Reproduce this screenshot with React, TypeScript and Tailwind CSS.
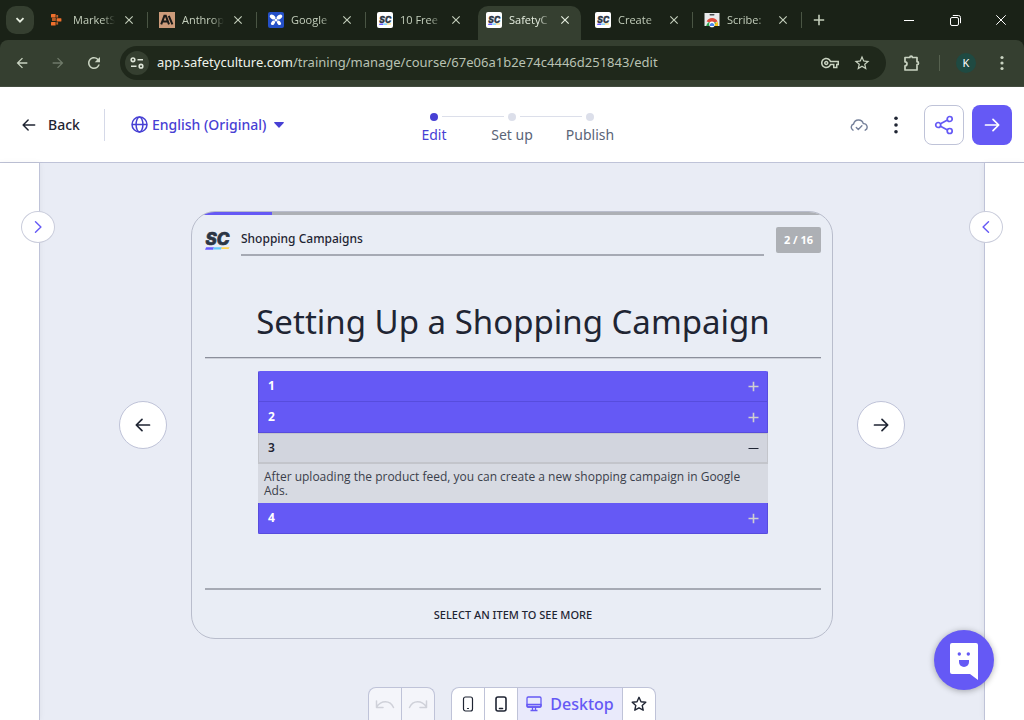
import { useState, type ReactNode } from "react";
import {
  MdArrowBack,
  MdArrowForward,
  MdClose,
  MdOutlineVpnKey,
  MdRefresh,
  MdStarBorder,
} from "react-icons/md";

function ScMark({ className }: { className?: string }) {
  return (
    <svg viewBox="0 0 26 20" className={className} overflow="visible" aria-hidden="true">
      <text
        x="0.6"
        y="15"
        fontFamily="Inter, 'Liberation Sans', sans-serif"
        fontSize="17"
        fontWeight="800"
        fontStyle="italic"
        fill="#2b3544"
        stroke="#2b3544"
        strokeWidth="0.7"
      >
        SC
      </text>
      <path d="M1.2 17.2H9l-1 2.6H0z" fill="#6559ff" />
      <path d="M9 17.2h8l-1 2.2H8z" fill="#62c8f8" />
      <path d="M17 17.2h7.5l-1 1.9H16z" fill="#ffd34f" />
    </svg>
  );
}

function ScFavicon() {
  return (
    <span className="flex size-4 shrink-0 items-center justify-center rounded-xs bg-white">
      <ScMark className="w-[13px]" />
    </span>
  );
}

function BlocksFavicon() {
  return (
    <svg viewBox="0 0 16 16" className="size-4 shrink-0" fill="#f0702c" aria-hidden="true">
      <rect x="1" y="2" width="4.600" height="3.400" rx=".5" />
      <rect x="2" y="5.800" width="3.800" height="3.200" rx=".5" opacity=".75" />
      <rect x="6.300" y="3" width="1.800" height="2.600" opacity=".8" />
      <rect x="6.600" y="6.200" width="4.800" height="3.400" rx=".5" />
      <rect x="6.300" y="10.200" width="1.800" height="2.400" opacity=".8" />
      <rect x="1" y="10" width="4.600" height="3.400" rx=".5" />
    </svg>
  );
}

function AnthropicFavicon() {
  return (
    <svg viewBox="0 0 16 16" className="size-4 shrink-0" aria-hidden="true">
      <rect width="16" height="16" fill="#cc9b7a" />
      <path
        d="M2.200 12.400 5.400 3.800h1.400l3.200 8.600M3.800 9.500h4.800M9.800 3.800l3.600 8.600"
        fill="none"
        stroke="#1b1a18"
        strokeWidth="2"
      />
    </svg>
  );
}

function ButterflyFavicon() {
  return (
    <svg viewBox="0 0 16 16" className="size-4 shrink-0" aria-hidden="true">
      <rect width="16" height="16" rx="2" fill="#2450c8" />
      <g fill="#fff">
        <ellipse cx="4.6" cy="5" rx="3.1" ry="2" transform="rotate(35 4.6 5)" />
        <ellipse cx="11.4" cy="5" rx="3.1" ry="2" transform="rotate(-35 11.4 5)" />
        <ellipse cx="5" cy="10.8" rx="2.5" ry="1.7" transform="rotate(-50 5 10.8)" />
        <ellipse cx="11" cy="10.8" rx="2.5" ry="1.7" transform="rotate(50 11 10.8)" />
        <circle cx="8" cy="8" r="1.6" />
      </g>
    </svg>
  );
}

function WebStoreFavicon() {
  return (
    <svg viewBox="0 0 16 16" className="size-4 shrink-0" aria-hidden="true">
      <path d="M.5 1h15v13H.5z" fill="#e9eaec" />
      <rect x="5.5" y="2" width="5" height="1.4" rx=".7" fill="#4a4d52" />
      <path d="M2.200 14a6 6 0 0 1 11.600 0z" fill="#2da350" />
      <path d="M2.600 9.600a6 6 0 0 1 11 0L8 11z" fill="#de4a3c" />
      <path d="M13.400 9.400q1.300 2.300.4 4.600H9z" fill="#fbc31b" />
      <circle cx="8" cy="12.400" r="2.800" fill="#fff" />
      <path d="M5.800 14a2.300 2.300 0 1 1 4.400 0z" fill="#4a86ee" />
    </svg>
  );
}

const tabs: { title: string; icon: ReactNode; active?: boolean }[] = [
  { title: "MarketS", icon: <BlocksFavicon /> },
  { title: "Anthrop", icon: <AnthropicFavicon /> },
  { title: "Google", icon: <ButterflyFavicon /> },
  { title: "10 Free", icon: <ScFavicon /> },
  { title: "SafetyC", icon: <ScFavicon />, active: true },
  { title: "Create", icon: <ScFavicon /> },
  { title: "Scribe:", icon: <WebStoreFavicon /> },
];

function TabStrip() {
  return (
    <div className="flex h-10 items-stretch bg-[#1a2217] font-['Open_Sans','Noto_Sans',sans-serif] text-[#c3cebb]">
      <div className="flex w-[42px] shrink-0 items-center pl-1.5">
        <button
          aria-label="Search tabs"
          className="flex size-7 items-center justify-center rounded-[10px] bg-[#353f30] text-[#e6eee0]"
        >
          <svg viewBox="0 0 10 10" className="size-2.5" fill="none" stroke="currentColor" strokeWidth="1.800">
            <path d="m1.500 3.200 3.500 3.500 3.500-3.500" />
          </svg>
        </button>
      </div>
      <div className="flex min-w-0">
        {tabs.map((tab, i) => {
          const separator = !tab.active && !tabs[i + 1]?.active;
          return (
            <div key={tab.title} className="flex w-[109px] shrink-0">
              <div
                className={
                  tab.active
                    ? "mt-1.5 flex w-[103px] items-center rounded-t-[10px] bg-[#353f30] pb-1.5 pl-2 text-[#e6eee0]"
                    : "mt-1.5 flex w-[103px] items-center pb-1.5 pl-2"
                }
              >
                {tab.icon}
                <span className="ml-[7px] w-[42px] whitespace-nowrap text-[11px] mask-r-from-70%">
                  {tab.title}
                </span>
                <button aria-label={`Close ${tab.title}`} className="ml-1.5 flex size-4 items-center justify-center">
                  <MdClose className="size-3.5" />
                </button>
              </div>
              {separator && <div className="ml-[2px] h-4 w-px self-center bg-[#4a5544]" />}
            </div>
          );
        })}
      </div>
      <button aria-label="New tab" className="flex w-7 items-center justify-center">
        <svg viewBox="0 0 12 12" className="size-3" fill="none" stroke="currentColor" strokeWidth="1.600">
          <path d="M6 .8v10.400M.8 6h10.400" />
        </svg>
      </button>
      <div className="ml-auto flex text-white">
        <button aria-label="Minimize" className="flex w-[46px] items-center justify-center">
          <span className="h-px w-2.5 bg-white" />
        </button>
        <button aria-label="Restore" className="flex w-[46px] items-center justify-center">
          <svg viewBox="0 0 11 11" className="size-[11px]" fill="none" stroke="currentColor">
            <rect x=".5" y="2.500" width="8" height="8" rx="1.500" />
            <path d="M2.800.5h5.700a2 2 0 0 1 2 2v5.700" />
          </svg>
        </button>
        <button aria-label="Close window" className="flex w-[46px] items-center justify-center">
          <svg viewBox="0 0 10 10" className="size-2.5" fill="none" stroke="currentColor">
            <path d="m.3.3 9.400 9.400M9.700.3.3 9.700" />
          </svg>
        </button>
      </div>
    </div>
  );
}

function BrowserBar() {
  return (
    <div className="bg-[#1a2217]">
      <div className="flex h-[47px] items-center rounded-t-lg border-b border-[#434c3f] bg-[#353f30] px-1 font-['Noto_Sans','Open_Sans',sans-serif] text-[#c9d3c1]">
        <button aria-label="Go back" className="flex w-9 justify-center">
          <MdArrowBack className="size-4" />
        </button>
        <button aria-label="Go forward" className="flex w-9 justify-center text-[#6f7a69]">
          <MdArrowForward className="size-4" />
        </button>
        <button aria-label="Reload" className="flex w-9 justify-center">
          <MdRefresh className="size-[18px]" />
        </button>
        <div className="ml-2 flex h-[34px] min-w-0 flex-1 items-center rounded-full bg-[#1f281b] pl-[5px]">
          <button
            aria-label="Site information"
            className="flex size-6 shrink-0 items-center justify-center rounded-full bg-[#353f30]"
          >
            <svg viewBox="0 0 14 12" className="w-3.5" fill="none" stroke="#dfe6d9" strokeWidth="1.600">
              <circle cx="3" cy="2.800" r="1.800" />
              <path d="M7.500 2.800H13M1 9.200h5.500" />
              <circle cx="11" cy="9.200" r="1.800" />
            </svg>
          </button>
          <p className="ml-2 flex-1 overflow-hidden text-[13px] whitespace-nowrap text-[#b9c2b3]">
            <span className="text-[#eef3ea]">app.safetyculture.com</span>
            /training/manage/course/67e06a1b2e74c4446d251843/edit
          </p>
          <button aria-label="Passwords" className="flex w-8 justify-center">
            <MdOutlineVpnKey className="size-[18px]" />
          </button>
          <button aria-label="Bookmark" className="mr-2 flex w-8 justify-center">
            <MdStarBorder className="size-[18px]" />
          </button>
        </div>
        <button aria-label="Extensions" className="ml-2 flex w-9 justify-center">
          <svg viewBox="0 0 18 18" className="size-[18px]" fill="none" stroke="currentColor" strokeWidth="1.700" strokeLinejoin="round">
            <path d="M2 3.500h4.800a1.300 1.300 0 0 1 2.600 0H14v4.200a1.500 1.500 0 0 1 0 3V16H2v-4.200a2 2 0 0 0 0-4z" />
          </svg>
        </button>
        <div className="ml-[9px] h-4 w-px bg-[#56614f]" />
        <button
          aria-label="Profile"
          className="ml-4 flex size-5 items-center justify-center rounded-full bg-[#1f4a42] text-[11px] text-white"
        >
          K
        </button>
        <button aria-label="Browser menu" className="ml-2 flex w-9 justify-center">
          <svg viewBox="0 0 4 16" className="h-4" fill="currentColor">
            <circle cx="2" cy="2.500" r="1.600" />
            <circle cx="2" cy="8" r="1.600" />
            <circle cx="2" cy="13.500" r="1.600" />
          </svg>
        </button>
      </div>
    </div>
  );
}

function Arrow({ flip, className }: { flip?: boolean; className?: string }) {
  return (
    <svg viewBox="0 0 16 16" className={className} fill="none" stroke="currentColor" strokeWidth="1.700" strokeLinecap="round" strokeLinejoin="round" aria-hidden="true">
      {flip ? <path d="M14.500 8h-13M7 2.300 1.300 8 7 13.700" /> : <path d="M1.500 8h13M9 2.300 14.700 8 9 13.700" />}
    </svg>
  );
}

const steps = ["Edit", "Set up", "Publish"];

function AppHeader() {
  return (
    <header className="grid h-[76px] shrink-0 grid-cols-[1fr_auto_1fr] items-center border-b border-[#bfc3d8] bg-white px-3 text-sm text-[#1f2533]">
      <div className="flex items-center">
        <a href="#back" className="flex items-center gap-3 pl-2.5 font-medium">
          <Arrow flip className="size-3.5" />
          Back
        </a>
        <div className="ml-6 h-8 w-px bg-[#d5d9e8]" />
        <button className="ml-[26px] flex items-center gap-1 font-medium text-[#4740d4]">
          <svg viewBox="0 0 17 17" className="size-[17px]" fill="none" stroke="currentColor" strokeWidth="1.500" aria-hidden="true">
            <circle cx="8.500" cy="8.500" r="7.500" />
            <ellipse cx="8.500" cy="8.500" rx="3.400" ry="7.500" />
            <path d="M1 8.500h15" />
          </svg>
          English (Original)
          <svg viewBox="0 0 10 6" className="ml-1 w-2.5" fill="currentColor" aria-hidden="true">
            <path d="M.8 0h8.400a.6.6 0 0 1 .5 1L5.500 5.600a.7.7 0 0 1-1 0L.3 1a.6.6 0 0 1 .5-1z" />
          </svg>
        </button>
      </div>
      <ol className="grid grid-cols-[78px_78px_78px] pt-2">
        {steps.map((step, i) => (
          <li
            key={step}
            className={i === 0 ? "flex flex-col items-center text-[#4740d4]" : "flex flex-col items-center text-[#5a6477]"}
          >
            <div className="flex w-full items-center">
              <div className={i > 0 ? "h-px flex-1 bg-[#dcdfea]" : "h-px flex-1"} />
              <span className={i === 0 ? "mx-1 size-2 rounded-full bg-[#4740d4]" : "mx-1 size-2 rounded-full bg-[#dcdfea]"} />
              <div className={i < 2 ? "h-px flex-1 bg-[#dcdfea]" : "h-px flex-1"} />
            </div>
            <span className="mt-1 leading-5">{step}</span>
          </li>
        ))}
      </ol>
      <div className="flex items-center justify-end">
        <svg viewBox="0 0 18 14" className="w-[18px] text-[#75809a]" fill="none" stroke="currentColor" strokeWidth="1.400" strokeLinecap="round" strokeLinejoin="round" role="img" aria-label="Saved">
          <path d="M3 12.200A3.400 3.400 0 0 1 3.600 6a5 5 0 0 1 9.700-.4 3.500 3.500 0 0 1 1.900 6.600" />
          <path d="m6.300 9.400 2 2 3.600-3.600" />
        </svg>
        <button aria-label="More options" className="ml-3 flex size-8 items-center justify-center">
          <svg viewBox="0 0 4 18" className="h-[18px]" fill="currentColor">
            <circle cx="2" cy="2.300" r="1.800" />
            <circle cx="2" cy="9" r="1.800" />
            <circle cx="2" cy="15.700" r="1.800" />
          </svg>
        </button>
        <button aria-label="Share" className="ml-3 flex size-10 items-center justify-center rounded-lg border border-[#bfc3d8] text-[#6559f5]">
          <svg viewBox="0 0 20 20" className="size-5" fill="none" stroke="currentColor" strokeWidth="1.700">
            <circle cx="4.200" cy="10" r="2.500" />
            <circle cx="15.700" cy="4" r="2.500" />
            <circle cx="15.700" cy="16" r="2.500" />
            <path d="m6.500 8.800 7-3.700M6.500 11.200l7 3.700" />
          </svg>
        </button>
        <button aria-label="Next" className="ml-2 flex size-10 items-center justify-center rounded-lg bg-[#6559f5] text-white">
          <Arrow className="size-4" />
        </button>
      </div>
    </header>
  );
}

const items = [
  { id: 1, text: "" },
  { id: 2, text: "" },
  { id: 3, text: "After uploading the product feed, you can create a new shopping campaign in Google Ads." },
  { id: 4, text: "" },
];

function Accordion() {
  const [open, setOpen] = useState(3);
  return (
    <div className="mx-auto mt-[13px] w-[510px] max-w-full overflow-hidden rounded-xs">
      {items.map((item) => {
        const expanded = item.id === open;
        return (
          <div key={item.id}>
            <button
              aria-expanded={expanded}
              onClick={() => setOpen(expanded ? 0 : item.id)}
              className={
                expanded
                  ? "flex h-[31px] w-full items-center justify-between border border-b-2 border-[#c3c5cb] bg-[#d2d5de] pr-2 pl-[9px] text-xs font-semibold text-[#1f2533]"
                  : "flex h-[31px] w-full items-center justify-between border border-t-0 border-[#574cdd] bg-[#6559f5] pr-2 pl-[9px] text-xs font-bold text-white"
              }
            >
              {item.id}
              <svg viewBox="0 0 11 11" className="size-[11px]" fill="none" stroke={expanded ? "#1f2533" : "#cfcfd0"} strokeWidth={expanded ? 1 : 1.6} aria-hidden="true">
                <path d={expanded ? "M.5 5.500h10" : "M.5 5.500h10M5.500.7v9.600"} />
              </svg>
            </button>
            {expanded && item.text && (
              <p className="bg-[#d7dae2] px-1.5 pt-1.5 pb-[5px] font-['Open_Sans','Noto_Sans',sans-serif] text-xs leading-[14px] text-[#3b3f4b]">
                {item.text}
              </p>
            )}
          </div>
        );
      })}
    </div>
  );
}

function LessonCard() {
  return (
    <section className="flex min-h-[428px] w-[642px] min-w-0 flex-col overflow-hidden rounded-3xl border border-[#b9bdcc] bg-[#e9edf5] text-[#1f2533]">
      <div className="h-[3px] bg-[#adb0b5]">
        <div className="h-full w-1/8 bg-[#6559f5]" />
      </div>
      <div className="flex flex-1 flex-col pt-3 pr-[11px] pl-[13px]">
        <div className="flex items-start">
          <ScMark className="mt-[3px] w-[26px]" />
          <div className="ml-2.5 flex h-[29px] flex-1 items-start border-b-2 border-[#a6aab4]">
            <p className="text-xs leading-6 font-medium">Shopping Campaigns</p>
          </div>
          <span className="ml-3 flex h-[26px] w-[45px] items-center justify-center rounded-xs bg-[#adb0b5] text-[11px] font-bold text-white">
            2 / 16
          </span>
        </div>
        <h1 className="border-b border-[#8b8f9b] pt-[44px] pb-[13px] text-center text-[33px] leading-[44px] shadow-[0_1px_0_#cdd0d9]">
          Setting Up a Shopping Campaign
        </h1>
        <Accordion />
        <p className="mt-auto border-t-2 border-[#a6aab4] pt-[15px] pb-[13px] text-center text-[11px] leading-5 font-medium">
          SELECT AN ITEM TO SEE MORE
        </p>
      </div>
    </section>
  );
}

function NavButton({ label, flip }: { label: string; flip?: boolean }) {
  return (
    <button
      aria-label={label}
      className="flex size-12 shrink-0 items-center justify-center rounded-full border border-[#bfc3d8] bg-white text-[#1f2533]"
    >
      <Arrow flip={flip} className="size-4" />
    </button>
  );
}

function PhoneIcon({ wide }: { wide?: boolean }) {
  return (
    <svg viewBox="0 0 16 16" className="size-4" fill="none" stroke="#1f2533" strokeWidth={wide ? 1.6 : 1.2} aria-hidden="true">
      <rect x={wide ? 3 : 3.5} y="1" width={wide ? 10 : 9} height="14" rx="2" />
      <path d={wide ? "M6.500 12.500h3" : "M7.500 12.500h1"} strokeLinecap="round" />
    </svg>
  );
}

function BottomToolbar() {
  return (
    <div className="mt-12 flex gap-4">
      <div className="flex h-[33px] divide-x divide-[#bfc3d8] overflow-hidden rounded-t-lg border border-b-0 border-[#bfc3d8] bg-[#f4f5fa] text-[#cfd1d9]">
        <button aria-label="Undo" className="flex w-[33px] items-center justify-center">
          <svg viewBox="0 0 20 12" className="w-5" fill="none" stroke="currentColor" strokeWidth="1.500" strokeLinecap="round" strokeLinejoin="round">
            <path d="M1.500 3v6.500H8M1.500 9C6 2 15 1.500 18.500 9.500" />
          </svg>
        </button>
        <button aria-label="Redo" className="flex w-8 items-center justify-center">
          <svg viewBox="0 0 20 12" className="w-5" fill="none" stroke="currentColor" strokeWidth="1.500" strokeLinecap="round" strokeLinejoin="round">
            <path d="M18.500 3v6.500H12M18.500 9C14 2 5 1.500 1.500 9.500" />
          </svg>
        </button>
      </div>
      <div className="flex h-[33px] divide-x divide-[#bfc3d8] overflow-hidden rounded-t-lg border border-b-0 border-[#bfc3d8] bg-white">
        <button aria-label="Phone" className="flex w-[33px] items-center justify-center">
          <PhoneIcon />
        </button>
        <button aria-label="Tablet" className="flex w-[33px] items-center justify-center">
          <PhoneIcon wide />
        </button>
        <button className="flex items-center gap-2 bg-[#e9eafb] px-2 text-base font-medium text-[#6559f5]">
          <svg viewBox="0 0 16 16" className="size-4" fill="none" stroke="currentColor" strokeWidth="1.300" strokeLinejoin="round" aria-hidden="true">
            <path d="M1 8.500h14V10a1 1 0 0 1-1 1H2a1 1 0 0 1-1-1z" fill="#c7c4fa" />
            <rect x="1" y="1" width="14" height="10" rx="1.200" />
            <path d="M6.500 11v3M9.500 11v3M4.500 14.500h7" />
          </svg>
          Desktop
        </button>
        <button aria-label="Favourite" className="flex w-8 items-center justify-center text-[#1f2533]">
          <svg viewBox="0 0 16 16" className="size-4" fill="none" stroke="currentColor" strokeWidth="1.400" strokeLinejoin="round">
            <path d="m8 1.300 2 4.400 4.800.5-3.600 3.200 1 4.800L8 11.800l-4.200 2.400 1-4.800L1.200 6.200 6 5.700z" />
          </svg>
        </button>
      </div>
    </div>
  );
}

function PanelToggle({ label, left }: { label: string; left?: boolean }) {
  return (
    <button
      aria-label={label}
      className={
        left
          ? "absolute top-12 -right-4 z-10 flex h-8 w-[34px] items-center justify-center rounded-[50%] border border-[#c9ccdb] bg-white text-[#6559f5]"
          : "absolute top-12 -left-4 z-10 flex h-8 w-[34px] items-center justify-center rounded-[50%] border border-[#c9ccdb] bg-white text-[#6559f5]"
      }
    >
      <svg viewBox="0 0 8 12" className="h-3" fill="none" stroke="currentColor" strokeWidth="1.400" strokeLinecap="round" strokeLinejoin="round">
        <path d={left ? "m1.500.8 5.400 5.200-5.400 5.200" : "M6.500.8 1.100 6l5.400 5.200"} />
      </svg>
    </button>
  );
}

export default function App() {
  return (
    <div className="relative flex h-screen flex-col overflow-hidden bg-white font-['Noto_Sans','Open_Sans',sans-serif]">
      <TabStrip />
      <BrowserBar />
      <AppHeader />
      <div className="flex min-h-0 flex-1">
        <aside className="relative w-10 shrink-0 border-r border-[#bfc3d8] bg-white shadow-[0_0_6px_#0000000f]">
          <PanelToggle left label="Open left panel" />
        </aside>
        <main className="flex min-w-0 flex-1 flex-col items-center overflow-hidden bg-[#e9ecf5] pt-12">
          <div className="flex max-w-full items-center gap-6">
            <NavButton flip label="Previous slide" />
            <LessonCard />
            <NavButton label="Next slide" />
          </div>
          <BottomToolbar />
        </main>
        <aside className="relative w-10 shrink-0 border-l border-[#bfc3d8] bg-white shadow-[0_0_6px_#0000000f]">
          <PanelToggle label="Open right panel" />
        </aside>
      </div>
      <button
        aria-label="Open help chat"
        className="absolute right-[30px] bottom-[30px] z-20 flex size-[60px] items-center justify-center rounded-full bg-[#6559f5] shadow-[0_1px_6px_#00000050]"
      >
        <svg viewBox="0 0 28 38" className="mt-1 h-[38px]" aria-hidden="true">
          <path d="M2 0h24a2 2 0 0 1 2 2v35l-8-6H2a2 2 0 0 1-2-2V2a2 2 0 0 1 2-2z" fill="#fff" />
          <circle cx="9.300" cy="11" r="1.700" fill="#6559f5" />
          <circle cx="18.300" cy="11" r="1.700" fill="#6559f5" />
          <path d="M9 17h10v2a5 5 0 0 1-10 0z" fill="#6559f5" />
        </svg>
      </button>
    </div>
  );
}
